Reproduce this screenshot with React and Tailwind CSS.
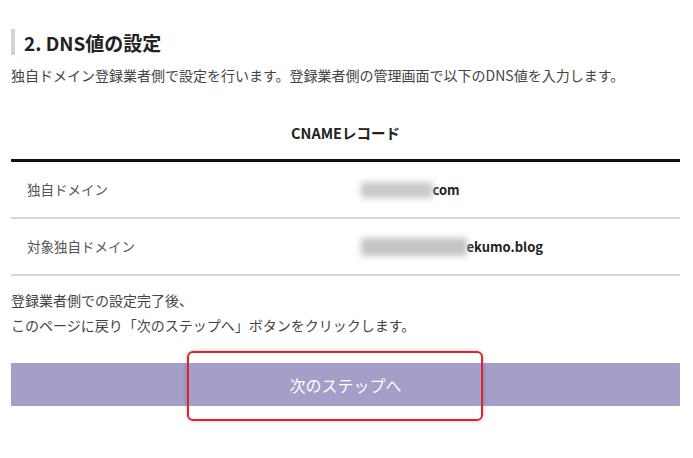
export default function App() {
  return (
    <div
      className="w-[693px] h-[458px] bg-white text-[#333] overflow-hidden"
      style={{ fontFamily: '"Noto Sans CJK JP", "Noto Sans", sans-serif' }}
    >
      <div className="pl-[11px] pr-[13px] pt-[29px]">
        {/* heading */}
        <div className="flex items-center h-[26px] border-l-4 border-[#d3d3db] pl-[9px]">
          <h2 className="text-[19px] font-bold leading-none text-[#222]">2. DNS値の設定</h2>
        </div>
        <p className="mt-[9px] text-[14px] leading-[22px] text-[#444]">
          独自ドメイン登録業者側で設定を行います。登録業者側の管理画面で以下のDNS値を入力します。
        </p>

        {/* table */}
        <div className="mt-[21px]">
          <div className="h-[55px] flex items-center justify-center text-[14.5px] font-bold text-[#222] border-b-[3px] border-[#111]">
            CNAMEレコード
          </div>
          <div className="flex h-[57px] items-center border-b-2 border-[#d6d6d6]">
            <div className="w-1/2 pl-[16px] text-[13.5px] text-[#555]">独自ドメイン</div>
            <div className="w-1/2 pl-[15px] flex items-center text-[13px] font-bold text-[#222]">
              <span className="inline-block w-[72px] h-[16px] bg-[#c9c9c9] blur-[3px]" />
              <span>com</span>
            </div>
          </div>
          <div className="flex h-[57px] items-center border-b-2 border-[#d6d6d6]">
            <div className="w-1/2 pl-[16px] text-[13.5px] text-[#555]">対象独自ドメイン</div>
            <div className="w-1/2 pl-[15px] flex items-center text-[13px] font-bold text-[#222]">
              <span className="inline-block w-[106px] h-[18px] bg-[#c4c4c4] blur-[3px]" />
              <span>ekumo.blog</span>
            </div>
          </div>
        </div>

        <p className="mt-[12px] text-[14px] leading-[25px] text-[#444]">
          登録業者側での設定完了後、
          <br />
          このページに戻り「次のステップへ」ボタンをクリックします。
        </p>

        {/* button */}
        <div className="relative mt-[25px]">
          <button className="w-full h-[43px] bg-[#a59ec9] text-white text-[16px] flex items-center justify-center">
            次のステップへ
          </button>
          <div className="absolute left-[176px] top-[-12px] w-[296px] h-[70px] border-2 border-[#d8252f] rounded-[6px] shadow-[0_0_4px_rgba(0,0,0,0.25)]" />
        </div>
      </div>
    </div>
  );
}
